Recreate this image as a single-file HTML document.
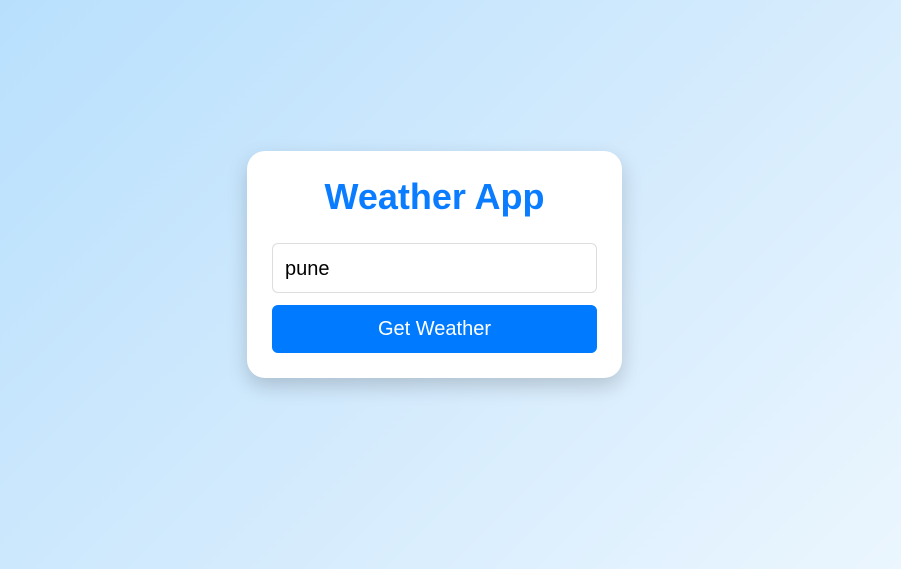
<!DOCTYPE html>
<html><head><style>
html,body{margin:0;padding:0;width:901px;height:569px;overflow:hidden}
body{background:linear-gradient(135deg,#b8e0fd 0%,#d2eafd 50%,#ebf6fe 100%);font-family:"Liberation Sans",Arial,sans-serif;position:relative}
.card{position:absolute;left:247px;top:151px;width:375px;height:227px;background:#fff;border-radius:18px;box-shadow:0 8px 20px rgba(0,0,0,0.18);box-sizing:border-box}
.in{position:absolute;left:25px;top:92px;width:325px;height:50px;border:1px solid #ddd;border-radius:6px;box-sizing:border-box;font-size:20px;padding:14px 12px;color:#000}
.btn{position:absolute;left:25px;top:154px;width:325px;height:48px;background:#007bff;border-radius:6px;color:#fff;font-size:20px;text-align:center;line-height:48px}
</style></head><body>
<div class="card">
<div style="position:absolute;top:25px;width:100%;text-align:center;color:#0a7cff;font-size:36px;font-weight:bold">Weather App</div>
<div class="in">pune</div>
<div class="btn">Get Weather</div>
</div>
</body></html>
